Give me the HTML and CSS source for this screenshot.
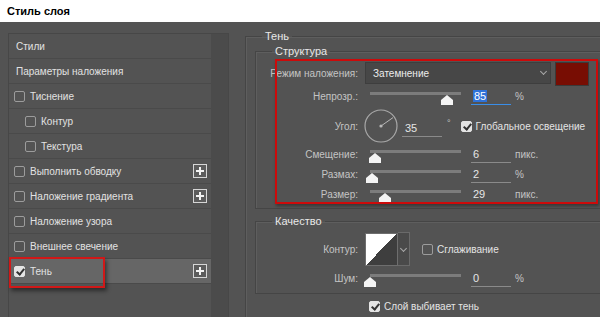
FILE: index.html
```html
<!DOCTYPE html>
<html lang="ru">
<head>
    <meta charset="utf-8" />
    <title>Стиль слоя</title>
    <link rel="stylesheet" href="styles.css">
</head>
<body>
    <header class="title">Стиль слоя</header>
    <main class="dialog">
        <aside class="sidebar">
            <ul class="styles">
                <li class="item">Стили</li>
                <li class="item">Параметры наложения</li>
                <li class="item check"><span class="cb"></span>Тиснение</li>
                <li class="item check sub"><span class="cb"></span>Контур</li>
                <li class="item check sub"><span class="cb"></span>Текстура</li>
                <li class="item check"><span class="cb"></span>Выполнить обводку<span class="plus"></span></li>
                <li class="item check"><span class="cb"></span>Наложение градиента<span class="plus"></span></li>
                <li class="item check"><span class="cb"></span>Наложение узора</li>
                <li class="item check"><span class="cb"></span>Внешнее свечение</li>
                <li class="item check active"><span class="cb on"></span>Тень<span class="plus"></span><span class="mark"></span></li>
            </ul>
            <div class="scroll"></div>
        </aside>

        <section class="panel">
            <fieldset class="group outer">
                <legend>Тень</legend>

                <fieldset class="group structure">
                    <legend>Структура</legend>
                    <div class="marked">
                        <div class="row blend">
                            <span class="lbl">Режим наложения:</span>
                            <div class="select">Затемнение<span class="chev"></span></div>
                            <span class="swatch"></span>
                        </div>
                        <div class="row">
                            <span class="lbl">Непрозр.:</span>
                            <div class="slider"><span class="thumb" style="left:71px"></span></div>
                            <span class="num focus"><span class="sel">85</span></span>
                            <span class="unit">%</span>
                        </div>
                        <div class="row angle">
                            <span class="lbl">Угол:</span>
                            <svg class="dial" width="34" height="34" viewBox="0 0 34 34">
                                <circle cx="17" cy="17" r="16" fill="none" stroke="#a8a8a8" stroke-width="1.2"/>
                                <line x1="17" y1="17" x2="29" y2="8.6" stroke="#b8b8b8" stroke-width="1"/>
                                <circle cx="17" cy="17" r="1.6" fill="#b8b8b8"/>
                            </svg>
                            <span class="num short">35</span>
                            <span class="deg">°</span>
                            <span class="cb on global"></span>
                            <span class="text">Глобальное освещение</span>
                        </div>
                        <div class="row">
                            <span class="lbl">Смещение:</span>
                            <div class="slider"><span class="thumb" style="left:-1px"></span></div>
                            <span class="num">6</span>
                            <span class="unit">пикс.</span>
                        </div>
                        <div class="row">
                            <span class="lbl">Размах:</span>
                            <div class="slider"><span class="thumb" style="left:-4px"></span></div>
                            <span class="num">2</span>
                            <span class="unit">%</span>
                        </div>
                        <div class="row">
                            <span class="lbl">Размер:</span>
                            <div class="slider"><span class="thumb" style="left:9px"></span></div>
                            <span class="num">29</span>
                            <span class="unit">пикс.</span>
                        </div>
                    </div>
                </fieldset>

                <fieldset class="group quality">
                    <legend>Качество</legend>
                    <div class="row contour">
                        <span class="lbl">Контур:</span>
                        <span class="curve"></span>
                        <span class="drop"><span class="chev"></span></span>
                        <span class="cb smooth"></span>
                        <span class="text">Сглаживание</span>
                    </div>
                    <div class="row noise">
                        <span class="lbl">Шум:</span>
                        <div class="slider"><span class="thumb" style="left:-6px"></span></div>
                        <span class="num">0</span>
                        <span class="unit">%</span>
                    </div>
                </fieldset>

                <div class="knockout">
                    <span class="cb on"></span>
                    <span class="text">Слой выбивает тень</span>
                </div>
            </fieldset>
        </section>
    </main>
</body>
</html>
```

FILE: styles.css
```css
* {
    margin: 0;
    padding: 0;
    box-sizing: border-box;
}

body {
    width: 600px;
    height: 317px;
    overflow: hidden;
    background-color: #535353;
    font-family: "Liberation Sans", Arial, sans-serif;
    font-size: 10px;
    color: #e2e2e2;
}

.title {
    height: 22px;
    line-height: 22px;
    padding-left: 7px;
    background-color: #ffffff;
    color: #000000;
    font-size: 11px;
    font-weight: bold;
}

.dialog {
    display: flex;
    height: 295px;
}

/* left list of styles */
.sidebar {
    display: flex;
    width: 221px;
    height: 300px;
    margin: 11px 0 0 8px;
    border: 1px solid #474747;
}

.styles {
    list-style: none;
    width: 202px;
}

.item {
    position: relative;
    display: flex;
    align-items: center;
    height: 25px;
    padding-left: 7px;
    border-bottom: 1px solid #4a4a4a;
    white-space: nowrap;
}

.item.check {
    padding-left: 5px;
}

.item.sub {
    padding-left: 16px;
}

.item .cb {
    margin-right: 5px;
}

.item.active {
    background-color: #666666;
}

.scroll {
    width: 17px;
    background-color: #4b4b4b;
}

.plus {
    position: relative;
    width: 14px;
    height: 14px;
    margin: 0 4px 0 auto;
    border: 1px solid #d6d6d6;
    background-color: #5c5c5c;
}

.plus::before,
.plus::after {
    content: "";
    position: absolute;
    background-color: #f2f2f2;
}

.plus::before {
    left: 2px;
    top: 5px;
    width: 8px;
    height: 2px;
}

.plus::after {
    left: 5px;
    top: 2px;
    width: 2px;
    height: 8px;
}

.mark {
    position: absolute;
    left: 0;
    top: -2px;
    width: 96px;
    height: 31px;
    border: 2px solid #d01818;
    box-shadow: 2px 3px 4px rgba(0, 0, 0, 0.45);
}

/* checkboxes */
.cb {
    position: relative;
    flex: none;
    width: 11px;
    height: 11px;
    border: 1px solid #9c9c9c;
    border-radius: 2px;
}

.cb.on {
    background-color: #e4e4e4;
    border-color: #e4e4e4;
}

.cb.on::after {
    content: "";
    position: absolute;
    left: 3px;
    top: 0;
    width: 3px;
    height: 6px;
    border: solid #333333;
    border-width: 0 2px 2px 0;
    transform: rotate(40deg);
}

/* right side */
.panel {
    margin-left: 16px;
    margin-top: 8px;
}

.group {
    border: 1px solid #454545;
    box-shadow: inset 1px 1px 0 #5e5e5e;
}

.group legend {
    padding: 0 3px;
    line-height: 13px;
    font-size: 11px;
    color: #e8e8e8;
}

.outer {
    width: 380px;
    height: 300px;
    padding: 2px 0 0 9px;
    border-right: none;
    border-bottom: none;
}

.outer > legend {
    margin-left: 7px;
}

.structure {
    padding: 1px 0 4px 19px;
}

.structure > legend {
    margin-left: -3px;
}

.marked {
    position: relative;
    width: 323px;
    padding: 3px 0 1px 2px;
}

.marked::after {
    content: "";
    position: absolute;
    inset: 0;
    border: 2px solid #cc0a0a;
    box-shadow: 1px 2px 3px rgba(0, 0, 0, 0.35);
}

.row {
    display: flex;
    align-items: center;
    height: 18px;
    margin-top: 2px;
    white-space: nowrap;
}

.lbl {
    display: flex;
    justify-content: flex-end;
    flex: none;
    width: 81px;
    margin-right: 7px;
    color: #c4c4c4;
}

.blend {
    height: 22px;
    margin-top: 0;
}

.marked .row:nth-child(2) {
    margin-top: 3px;
}

.select {
    display: flex;
    align-items: center;
    width: 186px;
    height: 22px;
    padding-left: 7px;
    background-color: #474747;
    border: 1px solid #3e3e3e;
    color: #ececec;
}

.chev {
    width: 5px;
    height: 5px;
    margin-left: auto;
    margin-right: 4px;
    margin-top: -3px;
    border: solid #a8a8a8;
    border-width: 0 1px 1px 0;
    transform: rotate(45deg);
}

.swatch {
    width: 34px;
    height: 24px;
    margin-left: 4px;
    margin-top: 2px;
    background-color: #780d03;
    border: 1px solid #3a3a3a;
}

.slider {
    position: relative;
    flex: none;
    width: 91px;
    height: 18px;
    margin-left: 5px;
}

.slider::before {
    content: "";
    position: absolute;
    left: 0;
    right: 0;
    top: 5px;
    height: 3px;
    background-color: #7c7c7c;
}

.thumb {
    position: absolute;
    top: 8px;
    width: 12px;
    height: 10px;
    background-color: #f4f4f4;
    clip-path: polygon(50% 0, 100% 50%, 100% 100%, 0 100%, 0 50%);
}

.num {
    flex: none;
    width: 40px;
    height: 17px;
    margin-left: 10px;
    padding-left: 2px;
    line-height: 16px;
    border-bottom: 1px solid #8a8a8a;
    color: #e6e6e6;
    font-size: 11px;
}

.num.focus {
    border-bottom-color: #3a8ee8;
}

.sel {
    background-color: #2f72d8;
    color: #ffffff;
    padding: 0 1px;
}

.unit {
    margin-left: 4px;
    color: #c4c4c4;
}

.angle {
    height: 34px;
    margin-top: 4px;
}

.dial {
    margin-left: -1px;
}

.num.short {
    margin-left: 4px;
    margin-top: 4px;
    padding-left: 3px;
}

.deg {
    margin-left: 5px;
    margin-top: -6px;
    font-size: 9px;
    color: #c4c4c4;
}

.global {
    margin-left: 10px;
}

.text {
    margin-left: 4px;
    color: #e4e4e4;
}

.quality {
    margin-top: 6px;
    padding: 3px 0 6px 21px;
    border-right: none;
}

.quality > legend {
    margin-left: -5px;
}

.contour {
    height: 34px;
    margin-top: 1px;
}

.curve {
    width: 33px;
    height: 33px;
    border: 1px solid #6e6e6e;
    background: linear-gradient(to bottom right, #ffffff 50%, #3e3e3e 50%);
}

.drop {
    display: flex;
    align-items: center;
    width: 12px;
    height: 34px;
    background-color: #4a4a4a;
    border: 1px solid #6a6a6a;
    border-left: none;
}

.drop .chev {
    margin: -2px auto 0;
}

.smooth {
    margin-left: 12px;
}

.noise {
    margin-top: 3px;
}

.knockout {
    display: flex;
    align-items: center;
    height: 18px;
    margin: 3px 0 0 114px;
}
```
